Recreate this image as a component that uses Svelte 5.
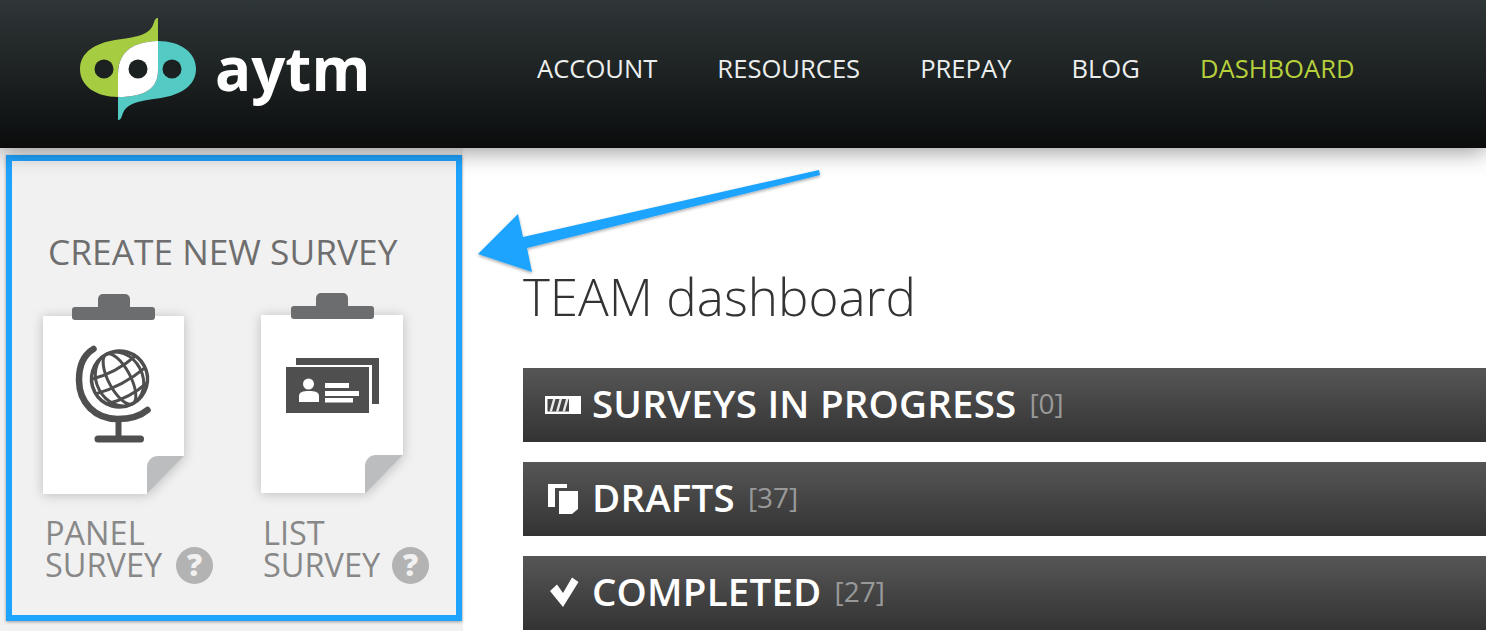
<script>
    const navItems = ['ACCOUNT', 'RESOURCES', 'PREPAY', 'BLOG', 'DASHBOARD'];
    const surveys = [
        { id: 'panel', lines: ['PANEL', 'SURVEY'] },
        { id: 'list', lines: ['LIST', 'SURVEY'] }
    ];
    const sections = [
        { id: 'progress', title: 'SURVEYS IN PROGRESS', count: 0 },
        { id: 'drafts', title: 'DRAFTS', count: 37 },
        { id: 'completed', title: 'COMPLETED', count: 27 }
    ];
</script>

<header class="topbar">
    <a class="logo" href="#top">
        <svg width="120" height="106" viewBox="78 16 120 106">
            <path fill="#a6cc42" d="M158 18V41C128 42 118 55 118 75V97C96 97 80 86 80 69C80 52 96 43 115 40C135 37 148 36 153 25C155 20 155 18 158 18Z"/>
            <path fill="#53cbc4" d="M118 120V97C146 97 158 88 158 70V41C180 41 196 52 196 69C196 86 180 95 161 98C141 101 128 102 123 113C121 118 121 120 118 120Z"/>
            <path fill="#fff" d="M158 41V70C158 88 146 97 118 97V75C118 55 128 42 158 41Z"/>
            <circle cx="104" cy="69" r="9.500" fill="#1b2020"/>
            <circle cx="138" cy="69" r="9.500" fill="#1b2020"/>
            <circle cx="172" cy="69" r="9.500" fill="#1b2020"/>
        </svg>
        <span class="wordmark">aytm</span>
    </a>
    <nav>
        {#each navItems as item}
            <a href="#top" class:active={item === 'DASHBOARD'}>{item}</a>
        {/each}
    </nav>
</header>

<div class="page">
    <aside>
        <h2>CREATE NEW SURVEY</h2>
        <div class="surveys">
            {#each surveys as survey}
                <div class="survey {survey.id}">
                    <div class="clip"><span class="tab"></span><span class="bar"></span></div>
                    <div class="paper-shadow">
                        <div class="paper">
                            {#if survey.id === 'panel'}
                                <svg width="84" height="100" viewBox="71.500 344 84 100">
                                    <g fill="none" stroke="#4f4f4f" stroke-linecap="round">
                                        <path stroke-width="6.500" d="M93 349C83 355 78.500 367 78.500 380C78.500 403 95 419 117 419C129 419 140 416 147 410"/>
                                        <path stroke-width="6" stroke-linecap="butt" d="M118 419V439"/>
                                        <path stroke-width="7" d="M97.500 439H140"/>
                                        <g stroke-width="3" transform="rotate(-28 119 379)">
                                            <circle cx="119" cy="379" r="28" stroke-width="3.500"/>
                                            <ellipse cx="119" cy="379" rx="11" ry="28"/>
                                            <ellipse cx="119" cy="379" rx="23" ry="28"/>
                                            <path stroke-linecap="butt" d="M94 366Q119 372 144 366M91 381Q119 387 147 381M96 395Q119 401 142 395"/>
                                        </g>
                                    </g>
                                </svg>
                            {:else}
                                <svg width="93" height="55" viewBox="287 358 93 55">
                                    <path fill="#4f4f4f" d="M297 358H380V404H373V365H297Z"/>
                                    <path fill="#4f4f4f" d="M287 367H370V413H287Z"/>
                                    <circle cx="309.500" cy="384" r="5.500" fill="#fff"/>
                                    <path fill="#fff" d="M300 402V396C300 392 304 391 310 391C316 391 320 392 320 396V402Z"/>
                                    <path fill="#fff" d="M326 383H350V388H326ZM326 391H360V396H326ZM326 398H354V402.500H326Z"/>
                                </svg>
                            {/if}
                            <div class="fold"></div>
                        </div>
                    </div>
                    <div class="label">
                        <div>{survey.lines[0]}</div>
                        <div class="label-row">{survey.lines[1]} <span class="help">?</span></div>
                    </div>
                </div>
            {/each}
        </div>
    </aside>

    <main>
        <h1>TEAM dashboard</h1>
        {#each sections as section}
            <section>
                {#if section.id === 'progress'}
                    <svg class="icon" width="36" height="18" viewBox="0 0 36 18">
                        <path fill="#fff" fill-rule="evenodd" d="M0 0H36V18H0ZM2.500 3V15.500H24V3Z"/>
                        <path fill="#e8e8e8" d="M8 3H10.500L7 15.500H4.500ZM14.500 3H17L13.500 15.500H11ZM21 3H23.500L20 15.500H17.500Z"/>
                    </svg>
                {:else if section.id === 'drafts'}
                    <svg class="icon" width="36" height="32" viewBox="0 0 36 32">
                        <path fill="#fff" d="M3 1H22V5H10V24H3Z"/>
                        <path fill="#fff" d="M14 8H33V26L27 31H14Z"/>
                    </svg>
                {:else}
                    <svg class="icon" width="36" height="32" viewBox="0 0 36 32">
                        <path fill="#fff" d="M5 14L12 7.500L18 16L27 0.500L33.500 5L18 30Z"/>
                    </svg>
                {/if}
                <span class="title">{section.title}</span>
                <span class="count">[{section.count}]</span>
            </section>
        {/each}
    </main>
</div>

<!-- annotation drawn over the screenshot -->
<div class="outline"></div>
<svg class="arrow" width="360" height="120" viewBox="470 160 360 120">
    <defs>
        <filter id="arrow-shadow" x="-5%" y="-10%" width="110%" height="125%">
            <feDropShadow dx="0" dy="1.500" stdDeviation="1.500" flood-color="#000" flood-opacity="0.35"/>
        </filter>
    </defs>
    <path fill="#1fa4fe" filter="url(#arrow-shadow)" d="M478 254L518 214L523 237L819 170L820 175L527 248L532 272Z"/>
</svg>

<style>
    :global(body) {
        background: #fff;
        overflow: hidden;
        font-family: "Open Sans", "Noto Sans", sans-serif;
    }

    a {
        text-decoration: none;
        color: inherit;
    }

    .topbar {
        position: relative;
        z-index: 1;
        display: flex;
        align-items: flex-start;
        height: 148px;
        background: linear-gradient(#2f3637, #0b0d0d);
        box-shadow: 0 3px 22px rgba(0, 0, 0, 0.42);
    }

    .logo {
        display: flex;
        align-items: flex-start;
        width: 537px;
        padding: 16px 0 0 78px;
        box-sizing: border-box;
    }

    .wordmark {
        margin: 12px 0 0 17px;
        font-size: 60px;
        line-height: 80px;
        font-weight: 700;
        color: #fff;
    }

    nav {
        display: flex;
        gap: 60px;
        padding-top: 52px;
        font-size: 25.600px;
        line-height: 34px;
        font-weight: 500;
        color: #eceeee;
    }

    nav a.active {
        color: #b6d03c;
    }

    .page {
        display: flex;
    }

    aside {
        flex: none;
        width: 463px;
        height: 483px;
        background: #f1f1f1;
        padding: 81px 0 0 48px;
        box-sizing: border-box;
        color: #888;
    }

    h2 {
        margin: 0;
        font-size: 35.300px;
        line-height: 44px;
        font-weight: 400;
        color: #6e6e6e;
        white-space: nowrap;
    }

    .surveys {
        display: flex;
        gap: 77px;
        margin: 21px 0 0 -5px;
    }

    .survey {
        width: 141px;
    }

    .survey.list {
        width: 142px;
        margin-top: -1px;
    }

    .clip {
        display: flex;
        flex-direction: column;
        align-items: center;
        position: relative;
        z-index: 1;
        margin-bottom: -4px;
    }

    .clip .tab {
        width: 32px;
        height: 13px;
        border-radius: 5px 5px 0 0;
        background: #6c6d6e;
    }

    .clip .bar {
        width: 83px;
        height: 13px;
        border-radius: 3px;
        background: #6c6d6e;
    }

    .paper-shadow {
        filter: drop-shadow(0 1px 6px rgba(0, 0, 0, 0.22));
    }

    .paper {
        position: relative;
        display: flex;
        justify-content: center;
        align-items: flex-start;
        height: 178px;
        padding-top: 28px;
        box-sizing: border-box;
        background: #fff;
        clip-path: polygon(0 0, 100% 0, 100% 140px, 104px 100%, 0 100%);
    }

    .survey.list .paper {
        padding-top: 43px;
        clip-path: polygon(0 0, 100% 0, 100% 140px, 105px 100%, 0 100%);
    }

    .fold {
        position: absolute;
        left: 104px;
        top: 140px;
        width: 38px;
        height: 38px;
        background: #bcbdbe;
        border-radius: 11px 0 0 0;
    }

    .label {
        margin: 23px 0 0 2px;
        font-size: 32.500px;
        line-height: 32px;
        white-space: nowrap;
    }

    .survey.list .label {
        margin-top: 24px;
    }

    .label-row {
        display: flex;
        align-items: center;
        gap: 14px;
        height: 32px;
    }

    .survey.list .label-row {
        gap: 12px;
    }

    .help {
        flex: none;
        display: flex;
        align-items: center;
        justify-content: center;
        width: 37px;
        height: 37px;
        border-radius: 50%;
        background: #b3b3b3;
        color: #f1f1f1;
        font-size: 30px;
        font-weight: 800;
    }

    main {
        flex: 1;
        min-width: 0;
        padding-left: 60px;
    }

    h1 {
        margin: 0;
        padding-top: 112px;
        font-size: 51.200px;
        line-height: 72px;
        font-weight: 300;
        color: #333;
        white-space: nowrap;
    }

    section {
        display: flex;
        align-items: center;
        height: 74px;
        margin-top: 20px;
        padding-left: 22px;
        background: linear-gradient(#565656, #333);
        color: #fff;
        white-space: nowrap;
    }

    h1 + section {
        margin-top: 36px;
    }

    .icon {
        flex: none;
        width: 36px;
        margin-right: 12px;
    }

    .title {
        position: relative;
        top: -2px;
        margin-left: -1px;
        font-size: 38.500px;
        font-weight: 600;
        letter-spacing: 0.2px;
    }

    .count {
        position: relative;
        top: -2px;
        margin-left: 13px;
        font-size: 28px;
        font-weight: 400;
        color: #999;
    }

    .outline {
        position: absolute;
        left: 6px;
        top: 155px;
        width: 456px;
        height: 466px;
        box-sizing: border-box;
        border: 6px solid #1fa4fe;
        box-shadow: 0 1px 3px rgba(0, 0, 0, 0.35);
    }

    .arrow {
        position: absolute;
        left: 470px;
        top: 160px;
    }
</style>
